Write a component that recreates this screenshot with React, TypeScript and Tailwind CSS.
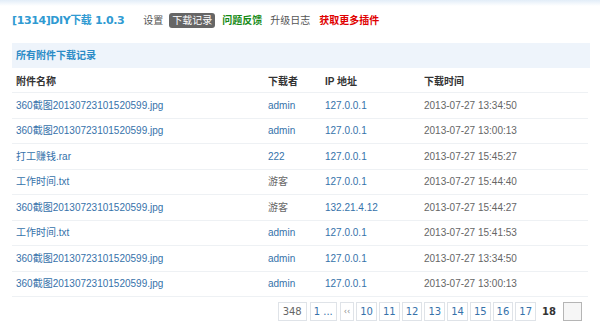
const rows = [
  { name: "360截图20130723101520599.jpg", user: "admin", ip: "127.0.0.1", time: "2013-07-27 13:34:50" },
  { name: "360截图20130723101520599.jpg", user: "admin", ip: "127.0.0.1", time: "2013-07-27 13:00:13" },
  { name: "打工赚钱.rar", user: "222", ip: "127.0.0.1", time: "2013-07-27 15:45:27" },
  { name: "工作时间.txt", user: "游客", ip: "127.0.0.1", time: "2013-07-27 15:44:40" },
  { name: "360截图20130723101520599.jpg", user: "游客", ip: "132.21.4.12", time: "2013-07-27 15:44:27" },
  { name: "工作时间.txt", user: "admin", ip: "127.0.0.1", time: "2013-07-27 15:41:53" },
  { name: "360截图20130723101520599.jpg", user: "admin", ip: "127.0.0.1", time: "2013-07-27 13:34:50" },
  { name: "360截图20130723101520599.jpg", user: "admin", ip: "127.0.0.1", time: "2013-07-27 13:00:13" },
];

const pages = ["10", "11", "12", "13", "14", "15", "16", "17"];

export default function App() {
  return (
    <div className="w-[600px] h-[330px] bg-white overflow-hidden font-['Liberation_Sans','Noto_Sans_CJK_SC',sans-serif] text-[10px]">
      {/* top band */}
      <div className="h-[6px] bg-gradient-to-b from-[#e2edf8] to-white" />

      <div className="pl-3 pr-[10px]">
        {/* Title + nav */}
        <div className="flex items-center h-[15px] mt-[7px]">
          <h1 className="font-['DejaVu_Sans','Noto_Sans_CJK_SC',sans-serif] font-bold text-[11px] tracking-[-0.4px] text-[#2f9ad2] leading-none">
            [1314]DIY下载 1.0.3
          </h1>
          <nav className="flex items-center ml-[19px]">
            <span className="text-[#555]">设置</span>
            <span className="ml-[6px] h-[15px] leading-[15px] px-[3px] rounded-[3px] bg-[#666] text-white">下载记录</span>
            <span className="ml-[7px] text-[#158a15] font-bold">问题反馈</span>
            <span className="ml-[8px] text-[#555]">升级日志</span>
            <span className="ml-[9px] text-[#e00000] font-bold">获取更多插件</span>
          </nav>
        </div>

        {/* Section header */}
        <div className="mt-[15px] h-[25px] flex items-center bg-[#eef4fb] pl-1">
          <span className="font-bold text-[#2b8bc6]">所有附件下载记录</span>
        </div>

        {/* Table */}
        <div className="w-[576px]">
          <div className="grid grid-cols-[252px_57px_99px_1fr] h-[25px] pt-[2px] items-center border-b border-[#eef1f4] font-bold text-[#333]">
            <div className="pl-1">附件名称</div>
            <div className="pl-1">下载者</div>
            <div className="pl-1">IP 地址</div>
            <div className="pl-1">下载时间</div>
          </div>
          {rows.map((r, i) => (
            <div
              key={i}
              className="grid grid-cols-[252px_57px_99px_1fr] h-[25.5px] items-center border-b border-[#eef1f4]"
            >
              <div className="pl-1 text-[#3672aa]">{r.name}</div>
              <div className={r.user === "游客" ? "pl-1 text-[#666]" : "pl-1 text-[#3672aa]"}>{r.user}</div>
              <div className="pl-1 text-[#3672aa]">{r.ip}</div>
              <div className="pl-1 text-[#666]">{r.time}</div>
            </div>
          ))}
        </div>

        {/* Pagination */}
        <div className="flex items-center justify-end mt-[5px] pr-[8px] font-['DejaVu_Sans',sans-serif] text-[10px]">
          <span className="h-[19px] leading-[17px] px-[4px] border border-[#dfe3e8] text-[#666] mr-[3px]">348</span>
          <span className="h-[19px] leading-[17px] px-[3px] border border-[#dfe3e8] text-[#3672aa] mr-[3px]">1 ...</span>
          <span className="h-[19px] leading-[17px] px-[3px] border border-[#dfe3e8] text-[#888] text-[8px] mr-[2px]">‹‹</span>
          {pages.map((p) => (
            <span key={p} className="h-[19px] leading-[17px] px-[3px] border border-[#dfe3e8] text-[#3672aa] mr-[2px]">
              {p}
            </span>
          ))}
          <span className="font-bold text-[#333] ml-[4px] mr-[7px]">18</span>
          <span className="w-[19px] h-[19px] border border-[#b5b5b5] bg-[#f6f6f6]" />
        </div>
      </div>
    </div>
  );
}
